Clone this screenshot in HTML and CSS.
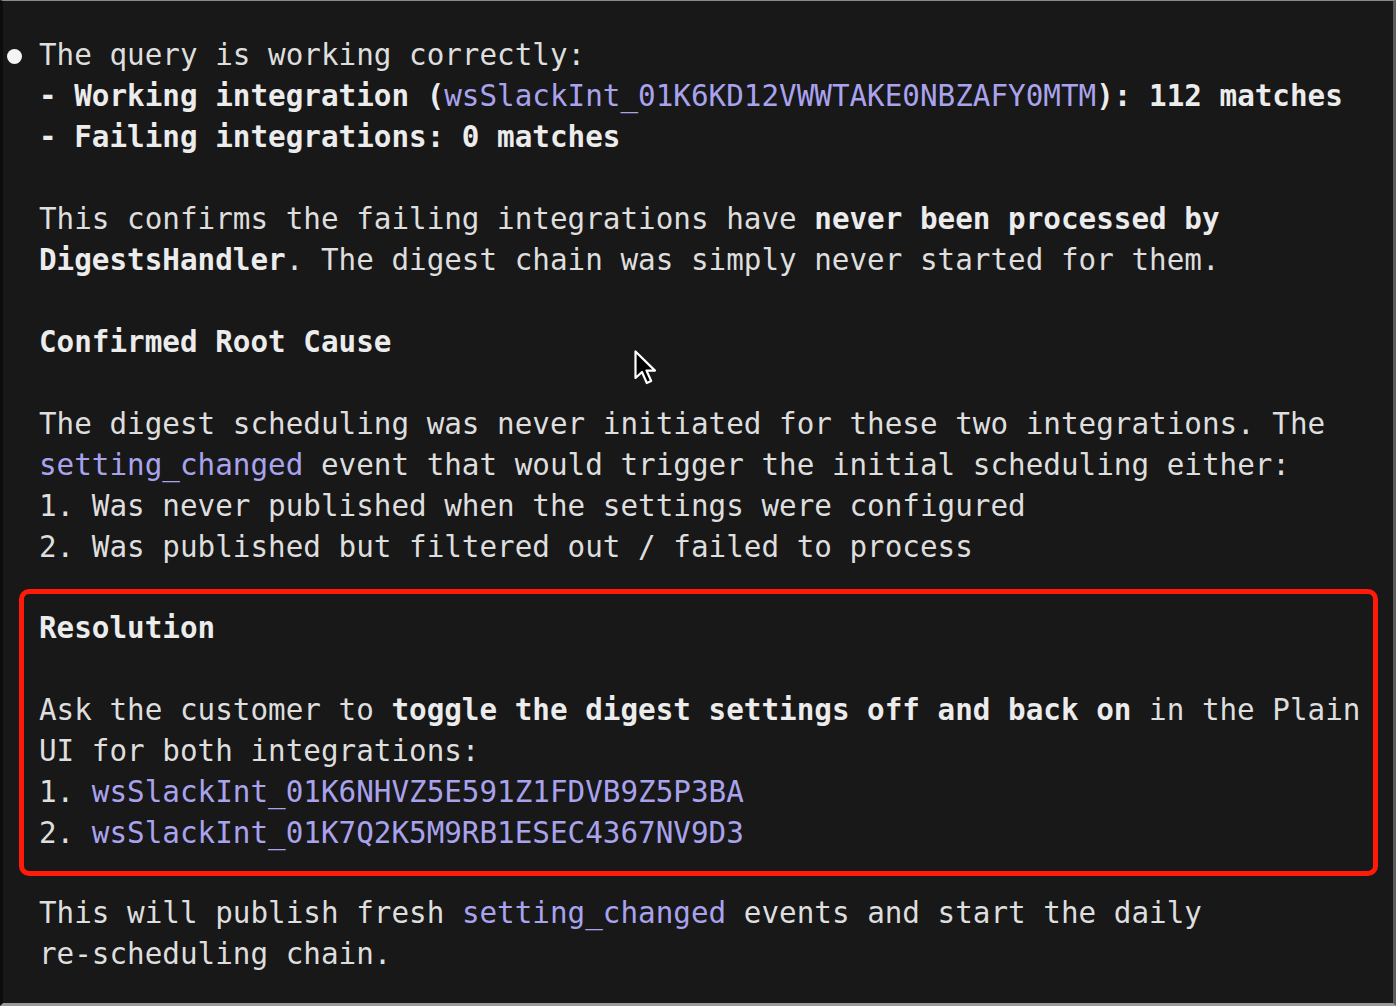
FILE: index.html
```html
<!DOCTYPE html>
<html lang="en">
<head>
<meta charset="utf-8">
<title>Terminal output</title>
<link rel="stylesheet" href="styles.css">
</head>
<body>
<main class="term">
  <div class="line"><span class="bullet"></span>The query is working correctly:</div>
  <div class="line b">- Working integration (<span class="code">wsSlackInt_01K6KD12VWWTAKE0NBZAFY0MTM</span>): 112 matches</div>
  <div class="line b">- Failing integrations: 0 matches</div>
  <div class="line"></div>
  <div class="line">This confirms the failing integrations have <b>never been processed by</b></div>
  <div class="line"><b>DigestsHandler</b>. The digest chain was simply never started for them.</div>
  <div class="line"></div>
  <div class="line b">Confirmed Root Cause</div>
  <div class="line"></div>
  <div class="line">The digest scheduling was never initiated for these two integrations. The</div>
  <div class="line"><span class="code">setting_changed</span> event that would trigger the initial scheduling either:</div>
  <div class="line">1. Was never published when the settings were configured</div>
  <div class="line">2. Was published but filtered out / failed to process</div>
  <section class="box">
    <div class="line b">Resolution</div>
    <div class="line"></div>
    <div class="line">Ask the customer to <b>toggle the digest settings off and back on</b> in the Plain</div>
    <div class="line">UI for both integrations:</div>
    <div class="line">1. <span class="code">wsSlackInt_01K6NHVZ5E591Z1FDVB9Z5P3BA</span></div>
    <div class="line">2. <span class="code">wsSlackInt_01K7Q2K5M9RB1ESEC4367NV9D3</span></div>
  </section>
  <div class="line">This will publish fresh <span class="code">setting_changed</span> events and start the daily</div>
  <div class="line">re-scheduling chain.</div>

  <svg class="cursor" width="26" height="38" viewBox="0 0 26 38" aria-hidden="true">
    <path d="M2.5 2.5 L2.5 29 L9 23 L13.8 34 L18.2 32 L13.5 21.6 L22 21.6 Z" fill="#000" stroke="#fff" stroke-width="2.2" stroke-linejoin="round"/>
  </svg>
</main>
</body>
</html>
```

FILE: styles.css
```css
html, body {
  margin: 0;
  padding: 0;
  background: #181818;
}

.term {
  position: relative;
  box-sizing: border-box;
  width: 1396px;
  height: 1006px;
  overflow: hidden;
  background: #181818;
  border-top: 1px solid #8a8a8a;
  border-left: 3px solid #0c0c0c;
  border-right: 3px solid #5c5c5c;
  border-bottom: 3px solid #9a9a9a;
  padding: 33.5px 15px 0 36px;
  font-family: "DejaVu Sans Mono", "Liberation Mono", monospace;
  font-size: 29.28px;
  line-height: 41px;
  color: #dedede;
}

.line {
  height: 41px;
  white-space: pre;
}

.b, b {
  font-weight: bold;
  color: #ececec;
}

.code {
  font-weight: normal;
  color: #a9a3ee;
}

.bullet {
  display: inline-block;
  width: 15px;
  height: 15px;
  border-radius: 50%;
  background: #f4f4f4;
  margin-left: -32px;
  margin-right: 17px;
  vertical-align: 1px;
}

.box {
  margin: 21.5px 0 17.5px -20px;
  border: 5px solid #ff1a0a;
  border-radius: 10px;
  padding: 13.5px 15px 17px 15px;
}

.cursor {
  position: absolute;
  left: 630px;
  top: 348px;
}
```
